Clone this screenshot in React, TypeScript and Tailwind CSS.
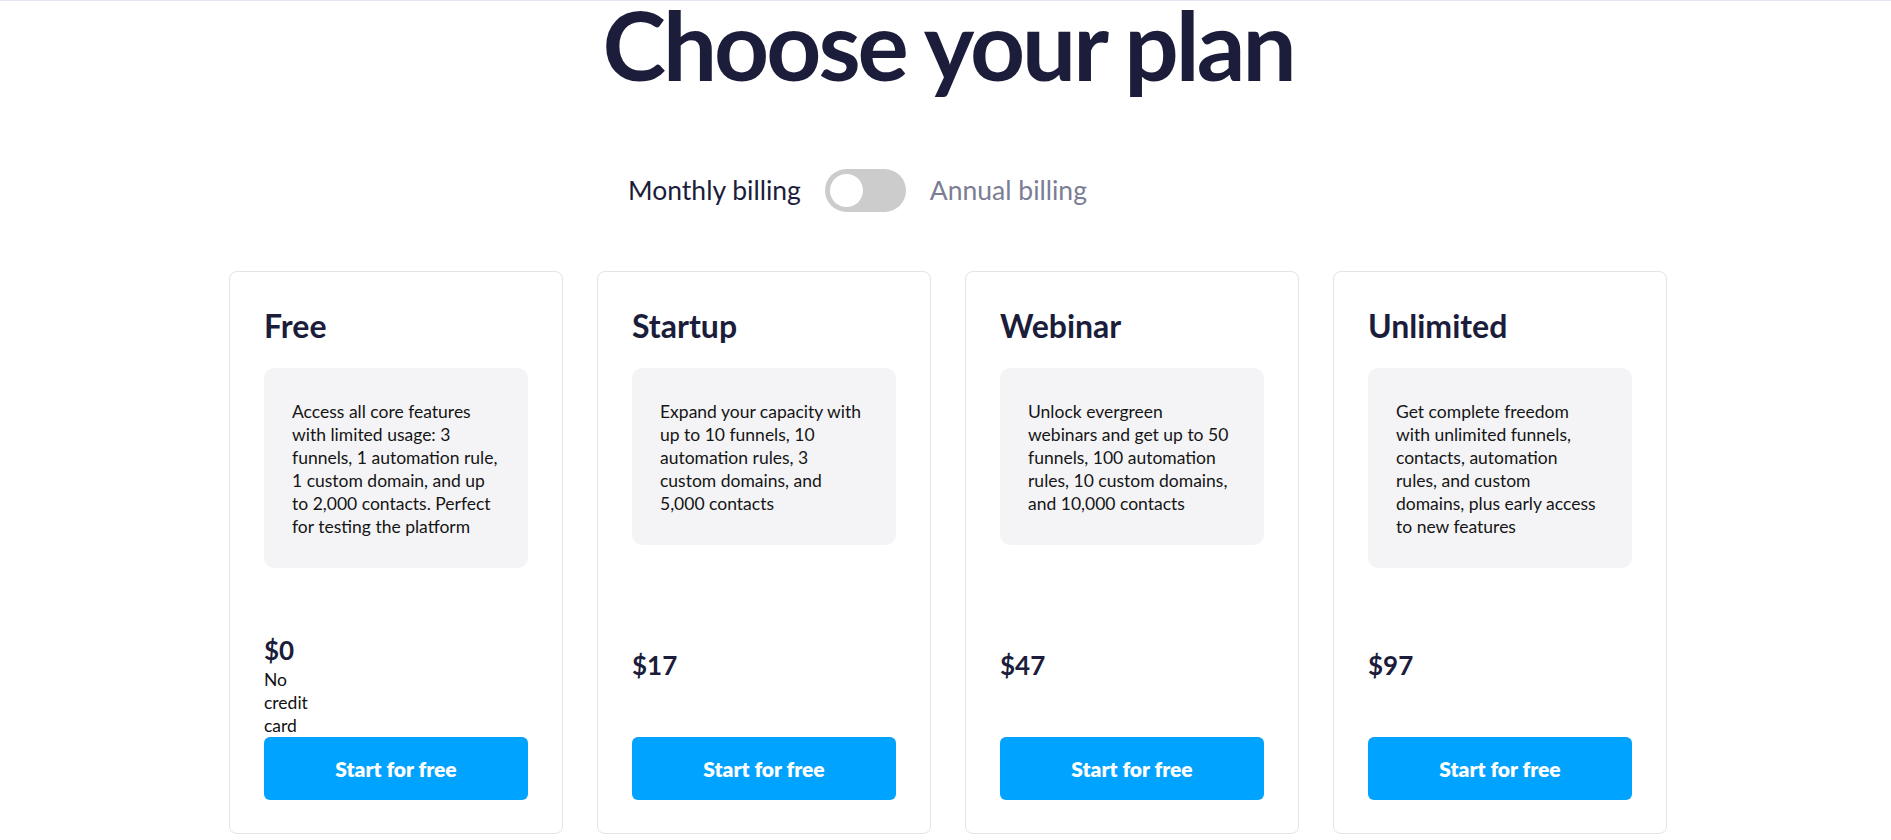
import { useState } from "react"

const plans = [
    {
        name: "Free",
        description:
            "Access all core features\nwith limited usage: 3\nfunnels, 1 automation rule,\n1 custom domain, and up\nto 2,000 contacts. Perfect\nfor testing the platform",
        price: "$0",
        note: "No credit card",
    },
    {
        name: "Startup",
        description:
            "Expand your capacity with\nup to 10 funnels, 10\nautomation rules, 3\ncustom domains, and\n5,000 contacts",
        price: "$17",
        note: "",
    },
    {
        name: "Webinar",
        description:
            "Unlock evergreen\nwebinars and get up to 50\nfunnels, 100 automation\nrules, 10 custom domains,\nand 10,000 contacts",
        price: "$47",
        note: "",
    },
    {
        name: "Unlimited",
        description:
            "Get complete freedom\nwith unlimited funnels,\ncontacts, automation\nrules, and custom\ndomains, plus early access\nto new features",
        price: "$97",
        note: "",
    },
]

export default function App() {
    const [annual, setAnnual] = useState(false)

    return (
        <main className="min-h-screen bg-white border-t border-[#ebe3ef] font-['Lato','Liberation_Sans',sans-serif] text-[#1b1d3b]">
            <section className="pl-[5px] flex flex-col items-center">
                <h1 className="-mt-[5px] text-[96px] leading-none font-bold tracking-[-3px]">
                    Choose your plan
                </h1>

                <div className="mt-[77px] flex items-center gap-6 pr-[181px]">
                    <span className="text-[26.5px]">Monthly billing</span>
                    <button
                        onClick={() => setAnnual(!annual)}
                        className="w-[81px] h-[43px] rounded-full bg-[#cccccc] p-[5px] flex items-center"
                    >
                        <span
                            className={
                                "block w-[33px] h-[33px] rounded-full bg-white transition-transform " +
                                (annual ? "translate-x-[38px]" : "translate-x-0")
                            }
                        />
                    </button>
                    <span className="text-[26.5px] text-[#7b7d95]">Annual billing</span>
                </div>

                <div className="mt-[59px] grid grid-cols-4 gap-[34px]">
                    {plans.map((plan, index) => {
                        return (
                            <article
                                key={index}
                                className="w-[334px] flex flex-col border border-[#e4e4e7] rounded-lg px-[34px] pt-[35px] pb-[33px]"
                            >
                                <h2 className="text-[32px] leading-[38px] font-bold">{plan.name}</h2>
                                <p className="mt-[23px] bg-[#f4f4f6] rounded-[10px] pl-7 pr-3 pt-8 pb-[30px] text-[17.5px] leading-[23px] text-[#151515] whitespace-pre-line">
                                    {plan.description}
                                </p>
                                <div className="mt-auto pt-16 flex flex-col">
                                    <span className="text-[26px] leading-[36px] font-bold">{plan.price}</span>
                                    <span className="w-min min-h-[54px] text-[17.5px] leading-[23px] text-[#111111]">
                                        {plan.note}
                                    </span>
                                </div>
                                <button className="h-[63px] w-full rounded-md bg-[#00a3ff] text-white text-[21px] font-extrabold">
                                    Start for free
                                </button>
                            </article>
                        )
                    })}
                </div>
            </section>
        </main>
    )
}
